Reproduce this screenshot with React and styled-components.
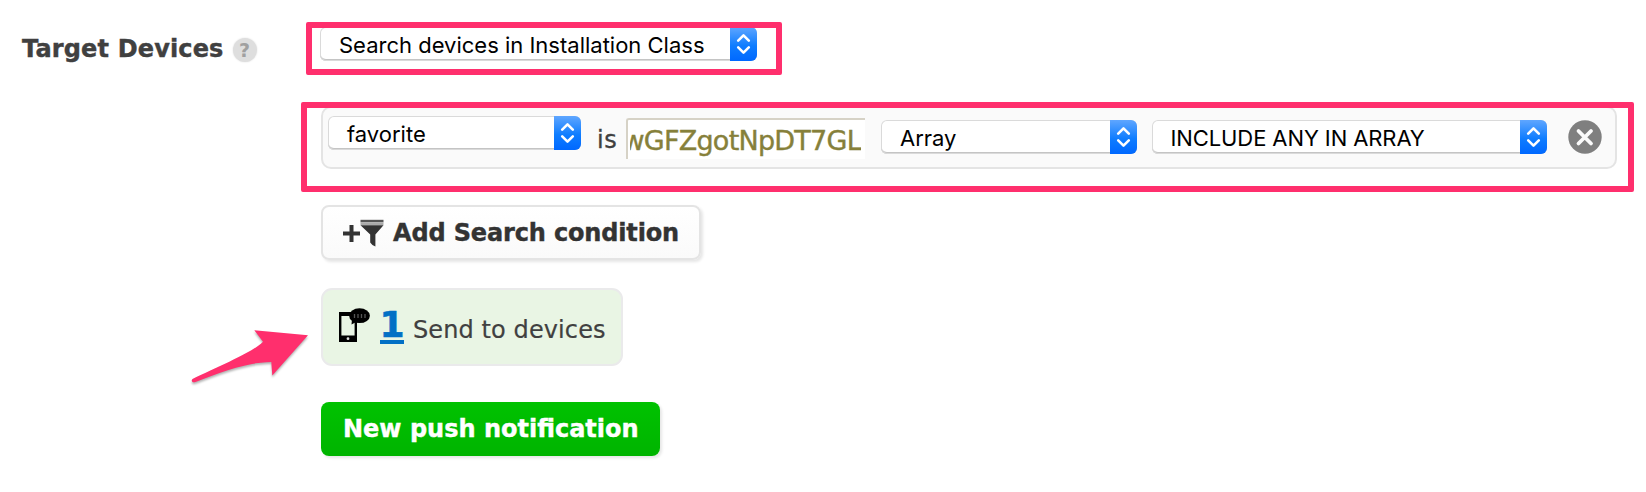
import React from "react";
import styled, { createGlobalStyle } from "styled-components";

const GlobalStyle = createGlobalStyle`
  * { box-sizing: border-box; }
  body {
    margin: 0;
    background: #fff;
    color: #404040;
    font: 24px/30px Verdana, "DejaVu Sans", sans-serif;
  }
`;

const Page = styled.main`
  position: relative;
  display: grid;
  grid-template-columns: 320px 1fr;
  width: 1646px;
  height: 492px;
  overflow: hidden;
`;

const LabelColumn = styled.div`
  display: flex;
  align-items: flex-start;
  gap: 9px;
  padding: 34px 0 0 22px;
`;

const Label = styled.span`
  font-weight: 700;
  letter-spacing: 0.15px;
  -webkit-text-stroke: 0.4px;
`;

const HelpBadge = styled.span`
  width: 24px;
  height: 24px;
  margin-top: 4px;
  border-radius: 50%;
  background: #dedede;
  box-shadow: 0 0 2px #dedede;
  color: #a0a0a0;
  font: 700 19px/24px "DejaVu Sans", sans-serif;
  text-align: center;
`;

const Fields = styled.div`
  display: flex;
  flex-direction: column;
  align-items: flex-start;
  padding-top: 27px;
`;

const SelectBox = styled.div`
  display: flex;
  flex: none;
  width: ${(p) => p.$width}px;
  height: 34px;
  margin-top: ${(p) => p.$drop || 0}px;
  border-radius: 6px;
  overflow: hidden;
  background: #fff;
  box-shadow: inset 0 0 0 1px #dadada, inset 0 -2px 0 #c4c4c4;
`;

const SelectText = styled.span`
  flex: 1;
  padding: 1px 0 0 ${(p) => p.$indent}px;
  color: #000;
  font: 22px/34px Inter, sans-serif;
  letter-spacing: ${(p) => p.$spacing || 0}px;
  white-space: nowrap;
`;

const Stepper = styled.span`
  display: block;
  width: 27px;
  height: 34px;
  background: linear-gradient(#5fa6ff, #0f7dff 55%, #0068ff);
`;

const Condition = styled.div`
  display: flex;
  align-items: flex-start;
  width: 1296px;
  height: 63px;
  margin: 45px 0 0 1px;
  padding: 8px 0 0 5px;
  border: 2px solid #e4e4e4;
  border-radius: 10px;
  background: #fafafa;
`;

const Operator = styled.span`
  margin: 9px 0 0 16px;
  width: 29px;
  letter-spacing: 0.5px;
  -webkit-text-stroke: 0.3px;
`;

const ValueInput = styled.div`
  display: flex;
  justify-content: flex-end;
  width: 239px;
  height: 41px;
  margin: 2px 16px 0 0;
  padding: 0 4px 0 2px;
  border: solid #d6d2c6;
  border-width: 2px 0 0 2px;
  border-radius: 3px 0 0 0;
  background: #fff;
`;

const ValueClip = styled.div`
  display: flex;
  justify-content: flex-end;
  width: 231px;
  overflow: hidden;
  color: #86803a;
  font-size: 27px;
  line-height: 41px;
  letter-spacing: -0.75px;
  white-space: nowrap;
  -webkit-text-stroke: 0.4px;
`;

const Spacer = styled.span`
  width: 15px;
  flex: none;
`;

const RemoveIcon = styled.svg`
  width: 34px;
  height: 34px;
  margin: 4px 0 0 21px;
`;

const AddButton = styled.button`
  display: flex;
  align-items: center;
  width: 380px;
  height: 55px;
  margin: 36px 0 0 1px;
  padding: 0 0 0 20px;
  border: 2px solid #e4e4e4;
  border-radius: 8px;
  background: linear-gradient(#fff, #fafafa);
  box-shadow: 2px 2px 3px rgba(0, 0, 0, 0.1);
  color: #333;
  font: 700 24px/30px Verdana, "DejaVu Sans", sans-serif;
  letter-spacing: -0.15px;
  white-space: nowrap;
  -webkit-text-stroke: 0.4px;
`;

const ButtonText = styled.span`
  padding-top: 1px;
`;

const FilterIcon = styled.svg`
  width: 42px;
  height: 30px;
  margin: 1px 8px 0 0;
`;

const SendBox = styled.div`
  display: flex;
  align-items: flex-start;
  width: 302px;
  height: 78px;
  margin: 28px 0 0 1px;
  padding-left: 16px;
  border: 2px solid #eaeaeb;
  border-radius: 11px;
  background: #e9f5e4;
`;

const PhoneIcon = styled.svg`
  width: 32px;
  height: 36px;
  margin-top: 17px;
`;

const Count = styled.a`
  width: 24px;
  height: 36px;
  margin: 18px 9px 0 9px;
  border-bottom: 4px solid #0270c5;
  color: #0270c5;
  font-size: 36px;
  font-weight: 700;
  line-height: 34px;
  text-align: center;
  text-indent: -0.5px;
  -webkit-text-stroke: 0.6px;
`;

const SendText = styled.span`
  margin-top: 25px;
  letter-spacing: 0.1px;
  white-space: nowrap;
  -webkit-text-stroke: 0.2px;
`;

const PrimaryButton = styled.button`
  width: 339px;
  height: 54px;
  margin: 36px 0 0 1px;
  padding: 0 0 0 22px;
  border: 0;
  border-radius: 8px;
  background: linear-gradient(#00c200, #00b400);
  box-shadow: 2px 2px 3px rgba(0, 0, 0, 0.1);
  color: #fff;
  font: 700 24px/55px Verdana, "DejaVu Sans", sans-serif;
  text-align: left;
  white-space: nowrap;
  -webkit-text-stroke: 0.4px;
`;

const Highlight = styled.div`
  position: absolute;
  left: ${(p) => p.$x}px;
  top: ${(p) => p.$y}px;
  width: ${(p) => p.$w}px;
  height: ${(p) => p.$h}px;
  border: 6px solid #ff2f6d;
  border-radius: 2px;
`;

const Arrow = styled.svg`
  position: absolute;
  left: 185px;
  top: 325px;
  width: 130px;
  height: 64px;
  filter: drop-shadow(0 2px 1px rgba(0, 0, 0, 0.3));
`;

function Select({ children, width, indent, spacing, drop }) {
  return (
    <SelectBox $width={width} $drop={drop}>
      <SelectText $indent={indent} $spacing={spacing}>{children}</SelectText>
      <Stepper>
        <svg width="27" height="34" viewBox="0 0 27 34" fill="none" stroke="#fff" strokeWidth="2.6" strokeLinecap="round" strokeLinejoin="round">
          <path d="M8.2 13.6 13.5 8.4 18.8 13.6M8.2 20.4 13.5 25.6 18.8 20.4" />
        </svg>
      </Stepper>
    </SelectBox>
  );
}

export default function App() {
  return (
    <Page>
      <GlobalStyle />
      <LabelColumn>
        <Label>Target Devices</Label>
        <HelpBadge>?</HelpBadge>
      </LabelColumn>
      <Fields>
        <Select width={437} indent={19}>Search devices in Installation Class</Select>
        <Condition>
          <Select width={253} indent={19}>favorite</Select>
          <Operator>is</Operator>
          <ValueInput>
            <ValueClip>wGFZgotNpDT7GL</ValueClip>
          </ValueInput>
          <Select width={256} indent={19} drop={4}>Array</Select>
          <Spacer />
          <Select width={395} indent={18.5} spacing={-0.1} drop={4}>INCLUDE ANY IN ARRAY</Select>
          <RemoveIcon viewBox="0 0 34 34">
            <circle cx="17" cy="17" r="16.7" fill="#7f7f7f" />
            <path d="M10.5 11 23 23.5M23 11 10.5 23.5" stroke="#fafafa" strokeWidth="3.8" strokeLinecap="round" />
          </RemoveIcon>
        </Condition>
        <AddButton>
          <FilterIcon viewBox="0 0 42 30">
            <path d="M0 15.5h17M8.5 7v17" stroke="#333" strokeWidth="4" />
            <path d="M17.5 1.8H40.500v2.4H17.5z" fill="#555" />
            <path d="M17.5 4.200H40.500v3H17.5z" fill="#aaa" />
            <path d="M17.5 7.2H40.500L32.4 16.500V28.500Q29.500 28 27.2 24.500V16.500z" fill="#333" />
          </FilterIcon>
          <ButtonText>Add Search condition</ButtonText>
        </AddButton>
        <SendBox>
          <PhoneIcon viewBox="0 0 32 36">
            <path d="M0 5h18v30H0z" fill="#000" />
            <path d="M2.4 9h13.2v19.500H2.4z" fill="#e9f5e4" />
            <ellipse cx="20.5" cy="8.7" rx="10.4" ry="7.4" fill="#000" />
            <path d="M13 12 12.5 17.500 19 14z" fill="#000" />
            <circle cx="9" cy="31.7" r="1.4" fill="#ddd" />
            <path d="M15.5 7v4M19 7v4M22.5 7v4M26 7v4" stroke="#555" strokeWidth="1.3" />
          </PhoneIcon>
          <Count>1</Count>
          <SendText>Send to devices</SendText>
        </SendBox>
        <PrimaryButton>New push notification</PrimaryButton>
      </Fields>
      <Highlight $x={306} $y={22} $w={476} $h={53} />
      <Highlight $x={301} $y={102} $w={1333} $h={90} />
      <Arrow viewBox="185 325 130 64">
        <path d="M192.5 379 Q191 380.5 192.5 382 Q193.5 382.5 195.5 382 C220 372.5 248 362 271.3 362 L272.3 375.5 308 335.3 254.3 330.3 263 341.7 C255 351 215 368 192.5 379Z" fill="#ff2f6d" />
      </Arrow>
    </Page>
  );
}
